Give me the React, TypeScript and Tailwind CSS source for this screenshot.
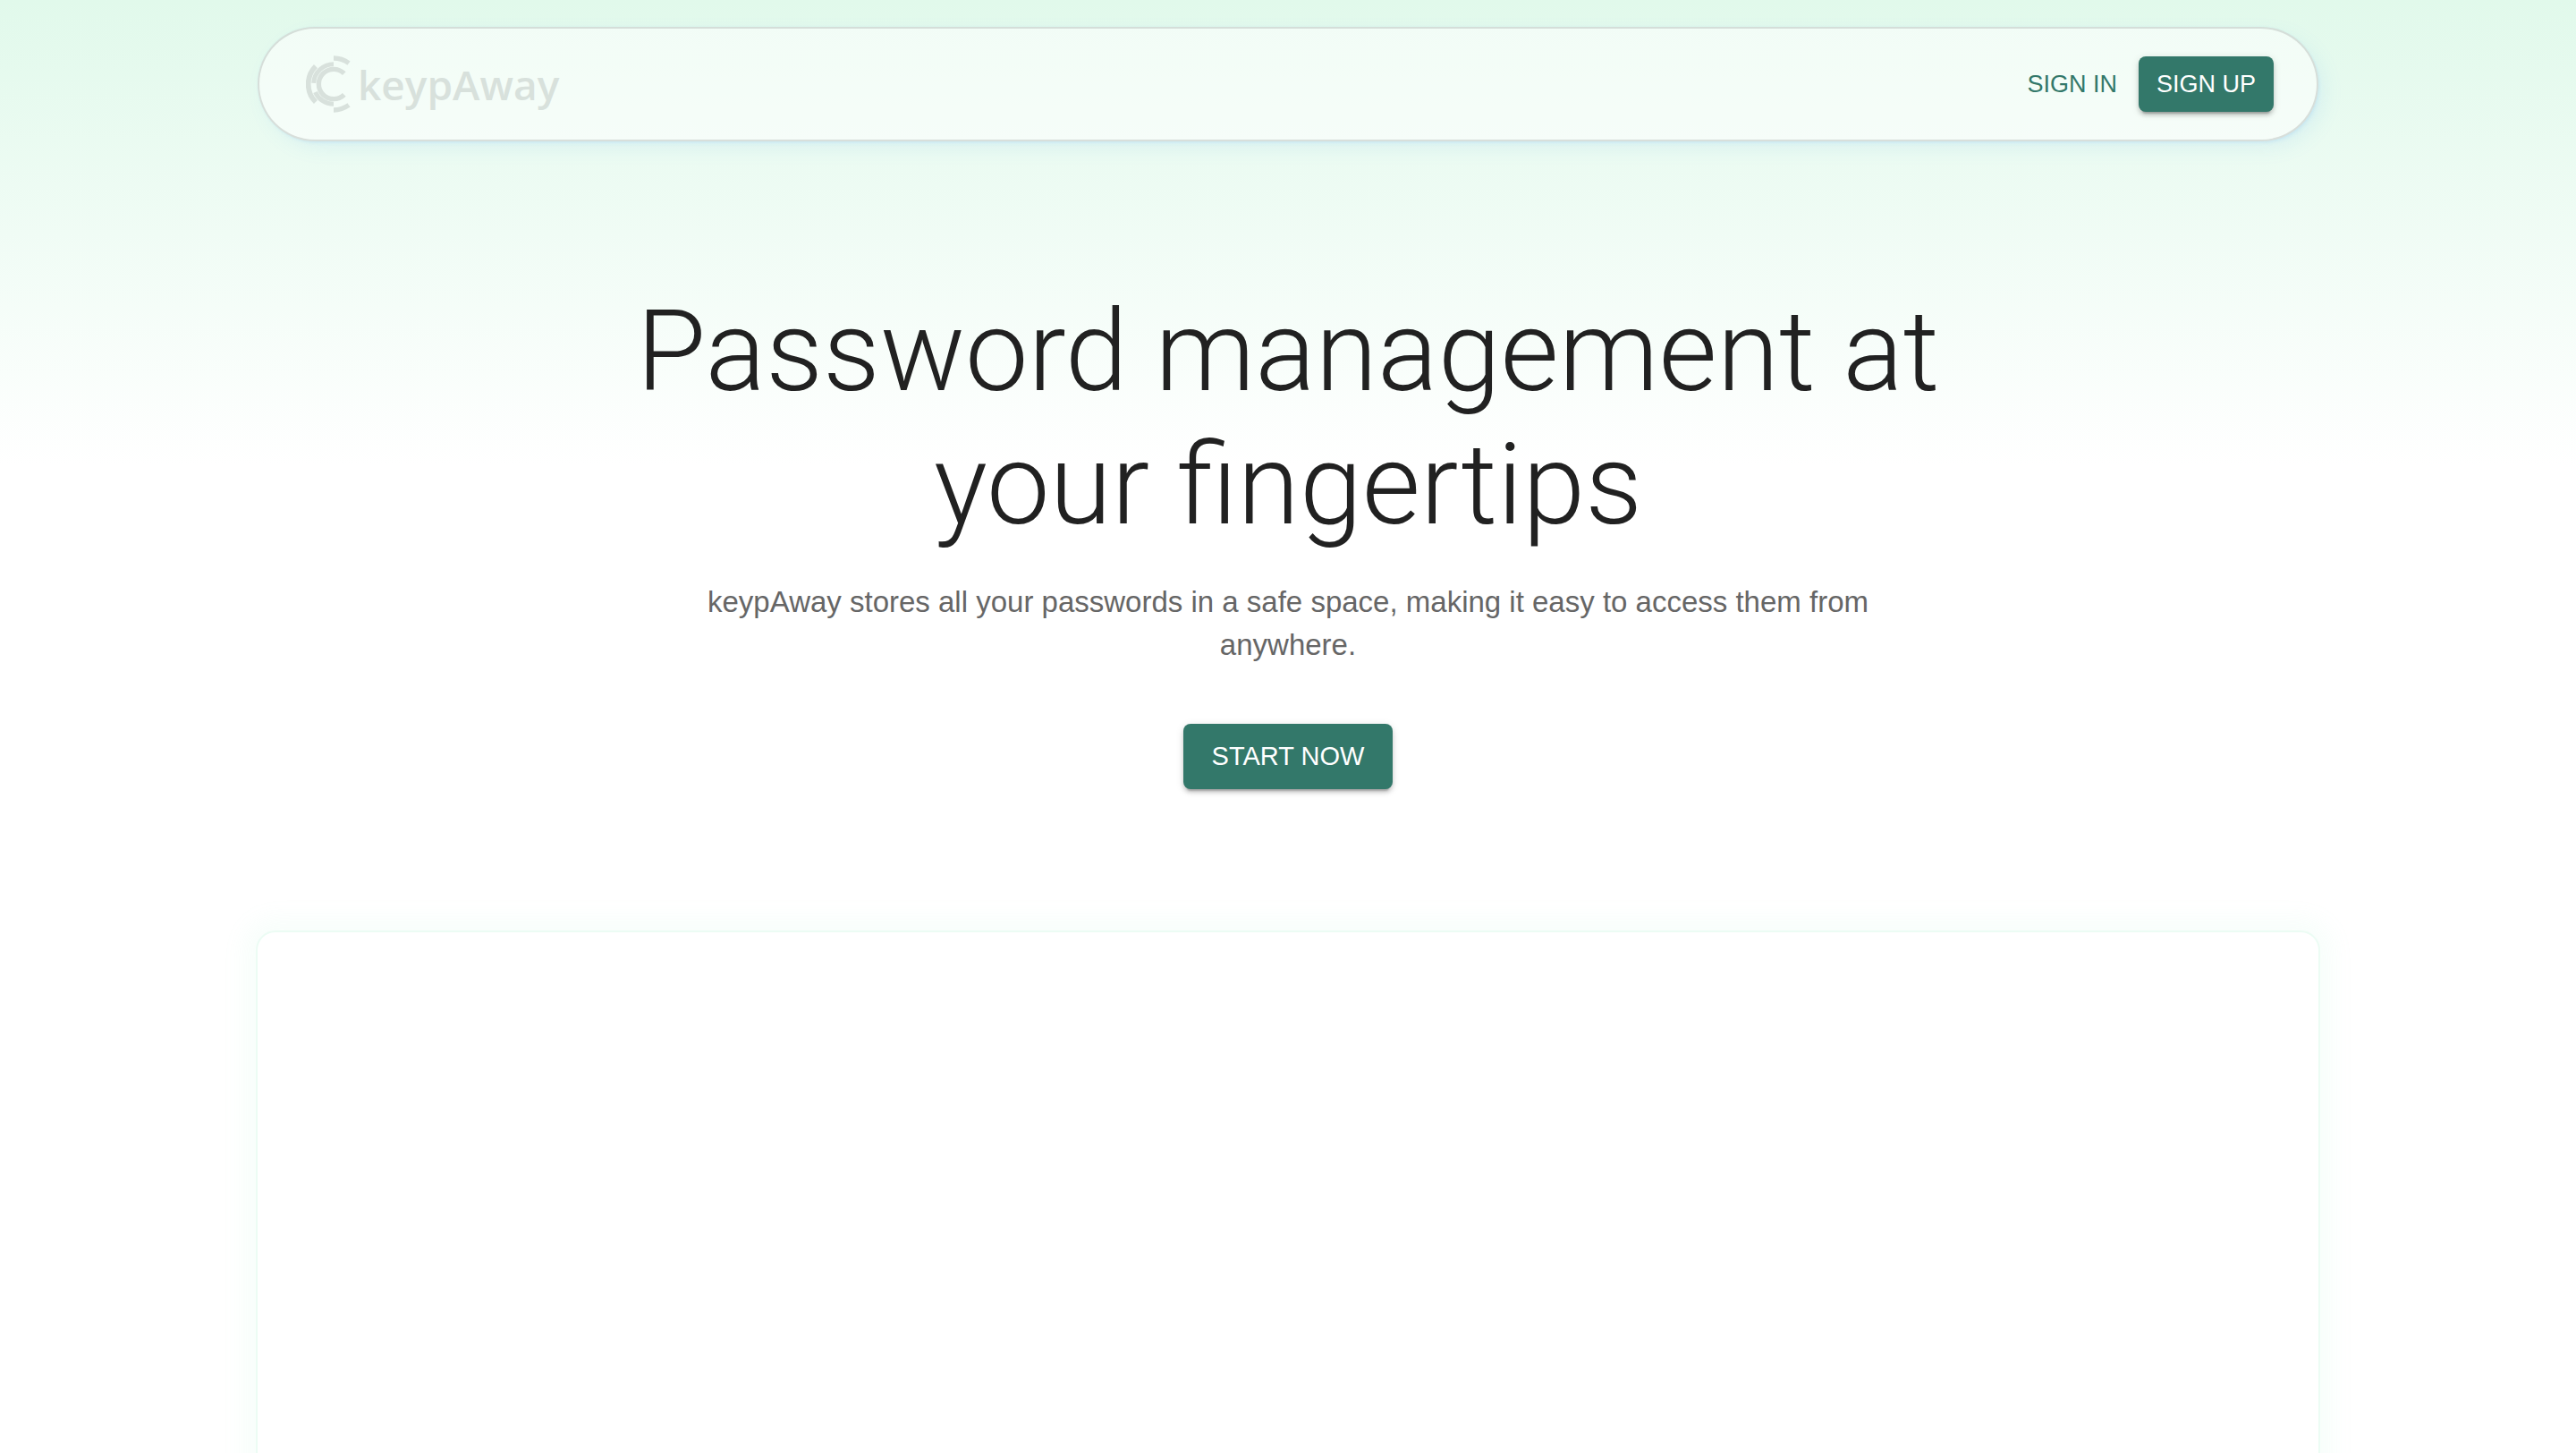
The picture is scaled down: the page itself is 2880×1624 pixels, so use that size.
const buttonShadow =
  "shadow-[0_6px_2px_-4px_rgba(0,0,0,0.2),0_4px_4px_0_rgba(0,0,0,0.14),0_2px_10px_0_rgba(0,0,0,0.12)]";

function LogoMark() {
  return (
    <svg
      viewBox="0 0 150 192"
      className="h-16 w-[50px] shrink-0"
      fill="none"
      stroke="currentColor"
      aria-hidden="true"
    >
      <path strokeWidth="16" d="M93 9A87 87 0 0 1 144 25.6" />
      <path strokeWidth="16" d="M93 183A87 87 0 0 0 144 166.4" />
      <path strokeWidth="17" d="M32.9 35.9A85 85 0 0 0 32.9 156.1" />
      <path strokeWidth="15" d="M93 29A67 67 0 0 0 26.1 92.5" />
      <path strokeWidth="15" d="M31.6 122.7A67 67 0 0 0 93 163" />
      <path strokeWidth="16" d="M128.4 60.6A50 50 0 1 0 128.4 131.4" />
    </svg>
  );
}

function Header() {
  return (
    <header className="flex min-h-32 items-center justify-between rounded-full border-2 border-black/12 bg-white/55 px-12 shadow-[0_0_2px_rgba(85,166,246,0.1),2px_3px_4px_-2px_rgba(85,166,246,0.15),8px_8px_24px_-5px_rgba(85,166,246,0.15)]">
      <a href="#" className="ml-1 flex items-center gap-2 text-[#d8e1dc]">
        <LogoMark />
        <span className="font-['Open_Sans',sans-serif] text-[46px] leading-[60px] font-semibold">
          keypAway
        </span>
      </a>
      <nav className="flex items-center gap-1">
        <button
          type="button"
          className="rounded-lg px-5 py-2 text-[27px] leading-[46px] text-[#33786a]"
        >
          SIGN IN
        </button>
        <button
          type="button"
          className={`rounded-lg bg-[#33786a] px-5 py-2 text-[27px] leading-[46px] text-white ${buttonShadow}`}
        >
          SIGN UP
        </button>
      </nav>
    </header>
  );
}

function Hero() {
  return (
    <section className="flex flex-col items-center pt-[161px] text-center">
      <h1 className="max-w-[1600px] font-['Roboto',sans-serif] text-[126px] leading-[149px] font-light text-[#212121]">
        Password management at your fingertips
      </h1>
      <p className="mt-8 max-w-[1380px] text-[33px] leading-12 text-[#666666]">
        keypAway stores all your passwords in a safe space, making it easy to
        access them from anywhere.
      </p>
      <button
        type="button"
        className={`mt-16 rounded-lg bg-[#33786a] px-8 py-3 text-[29px] leading-[49px] text-white ${buttonShadow}`}
      >
        START NOW
      </button>
      <div className="mt-40 h-[1400px] w-full rounded-[20px] bg-white shadow-[0_0_24px_16px_rgba(160,240,205,0.08)] outline-2 outline-[#ecfcf4]" />
    </section>
  );
}

export default function App() {
  return (
    <div className="bg-white bg-[linear-gradient(180deg,#e1f9eb,#ffffff)] bg-[length:100%_520px] bg-no-repeat font-['Liberation_Sans',Arial,sans-serif]">
      <div className="mx-auto w-4/5 max-w-[2304px] pt-[30px] pb-16">
        <Header />
        <main>
          <Hero />
        </main>
      </div>
    </div>
  );
}
